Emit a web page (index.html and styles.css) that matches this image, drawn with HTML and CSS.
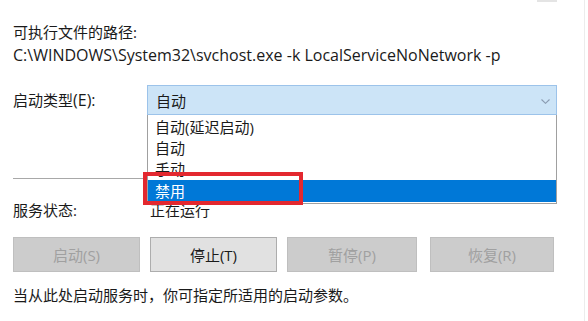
FILE: index.html
```html
<!DOCTYPE html>
<html lang="zh-CN">
<head>
  <meta charset="UTF-8" />
  <title>服务属性</title>
  <link rel="stylesheet" href="styles.css">
</head>
<body>
  <div class="dialog">
    <div class="edge-tab"></div>

    <div class="field-title">可执行文件的路径:</div>
    <div class="path">C:\WINDOWS\System32\svchost.exe -k LocalServiceNoNetwork -p</div>

    <div class="row startup">
      <label class="label">启动类型<span class="latin">(E):</span></label>
      <div class="combo">
        <div class="combo-box">
          <span>自动</span>
          <svg class="chevron" width="9" height="5" viewBox="0 0 9 5">
            <polyline points="0.5,0.5 4.5,4.3 8.5,0.5" fill="none" stroke="#8a9bb0" stroke-width="1.1"/>
          </svg>
        </div>
        <ul class="combo-list">
          <li>自动(延迟启动)</li>
          <li>自动</li>
          <li>手动</li>
          <li class="selected">禁用</li>
        </ul>
        <div class="mark"></div>
      </div>
    </div>

    <hr class="sep">

    <div class="row status">
      <span class="label">服务状态:</span>
      <span class="value">正在运行</span>
    </div>

    <div class="buttons">
      <button disabled>启动(S)</button>
      <button class="active">停止(T)</button>
      <button disabled>暂停(P)</button>
      <button disabled>恢复(R)</button>
    </div>

    <p class="hint">当从此处启动服务时，你可指定所适用的启动参数。</p>
  </div>
</body>
</html>
```

FILE: styles.css
```css
body {
  margin: 0;
  background: #fff;
  font-family: "Open Sans", "Noto Sans CJK SC", sans-serif;
  font-size: 15px;
  color: #1a1a1a;
}
.dialog {
  position: relative;
  width: 571px;
  height: 321px;
  padding-left: 13px;
  border-right: 1px solid #ececec;
  box-sizing: content-box;
}
.edge-tab {
  position: absolute;
  top: 0; left: 537px;
  width: 20px; height: 2px;
  background: #e4e4e4;
}
.field-title {
  padding-top: 22px;
  line-height: 20px;
}
.path {
  margin-top: 3px;
  line-height: 20px;
  font-size: 16px;
}
.latin {
  font-size: 16px;
}
.row {
  display: flex;
  align-items: center;
}
.label {
  width: 134px;
  flex: none;
}
.startup {
  margin-top: 20px;
  height: 30px;
}
.combo {
  position: relative;
  width: 410px;
  height: 30px;
}
.combo-box {
  height: 30px;
  box-sizing: border-box;
  border: 1px solid #9cc3ea;
  background: #cce4f7;
  display: flex;
  align-items: center;
  justify-content: space-between;
  padding: 0 6px 0 8px;
}
.chevron {
  margin-top: 2px;
}
.combo-list {
  position: absolute;
  top: 30px; left: 0;
  width: 410px;
  margin: 0;
  padding: 2px 0 1px;
  list-style: none;
  background: #fff;
  border: 1px solid #a0a0a0;
  border-top: none;
  box-sizing: border-box;
  z-index: 2;
}
.combo-list li {
  height: 21px;
  line-height: 21px;
  padding-left: 7px;
}
.combo-list li.selected {
  background: #0078d7;
  color: #fff;
  height: 22px;
  line-height: 22px;
}
.mark {
  position: absolute;
  top: 87px; left: -4px;
  width: 160px; height: 33px;
  border: 4px solid #e3282f;
  box-sizing: border-box;
  z-index: 3;
}
.sep {
  margin: 63px 0 0;
  width: 544px;
  border: none;
  border-top: 1px solid #a8a8a8;
}
.status {
  margin-top: 20px;
  height: 20px;
}
.status .value {
  padding-left: 3px;
}
.buttons {
  display: grid;
  grid-template-columns: 127px 127px 130px 127px;
  column-gap: 10px;
  margin-top: 18px;
}
.buttons button {
  height: 35px;
  margin: 0;
  font: inherit;
  border: 1px solid #adadad;
  background: #e1e1e1;
  color: #1a1a1a;
}
.buttons button:nth-child(4) {
  margin-left: 3px;
}
.buttons button:disabled {
  background: #cccccc;
  border-color: #bfbfbf;
  color: #a0a0a0;
}
.hint {
  margin: 13px 0 0;
  line-height: 20px;
}
```
